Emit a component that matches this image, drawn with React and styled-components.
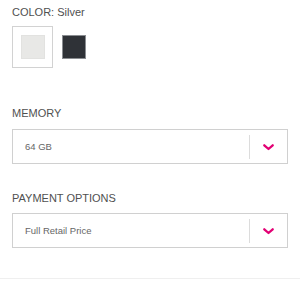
import styled, { createGlobalStyle } from "styled-components";

const GlobalStyle = createGlobalStyle`
  body {
    margin: 0;
    background: #fff;
    font-family: "Liberation Sans", Arial, sans-serif;
  }
`;

const Page = styled.div`
  display: flex;
  flex-direction: column;
  background: #fff;
  width: 300px;
  padding-top: 6px;
`;

const Section = styled.div`
  display: flex;
  flex-direction: column;
  padding: 0 12px;
  margin-bottom: ${(p) => p.$after || 0}px;
`;

const Label = styled.div`
  font-size: 11px;
  line-height: 13px;
  color: #505050;
  margin-bottom: ${(p) => p.$gap}px;
`;

const Value = styled.span`
  color: #505050;
`;

const Swatches = styled.div`
  display: flex;
  gap: 0;
`;

const SwatchBox = styled.div`
  width: 41px;
  height: 42px;
  box-sizing: border-box;
  border: 1px solid ${(p) => (p.$selected ? "#d2d2d2" : "transparent")};
  display: flex;
  align-items: center;
  justify-content: center;
  cursor: pointer;
`;

const Chip = styled.div`
  width: 24px;
  height: 24px;
  background: ${(p) => p.$color};
  border: 1px solid ${(p) => p.$edge};
  box-sizing: border-box;
`;

const SelectBox = styled.div`
  display: flex;
  align-items: center;
  height: 35px;
  box-sizing: border-box;
  border: 1px solid #d0d0d0;
`;

const SelectText = styled.div`
  flex: 1;
  padding-left: 12px;
  font-size: 9.5px;
  color: #666;
  margin-top: -1px;
`;

const ChevronCell = styled.div`
  width: 38px;
  height: 24px;
  border-left: 1px solid #dcdcdc;
  display: flex;
  align-items: center;
  justify-content: center;
  padding-top: 2px;
  box-sizing: border-box;
`;

const Divider = styled.div`
  height: 1px;
  background: #efefef;
  margin-top: 30px;
`;

const Chevron = () => (
  <svg width="11" height="7" viewBox="0 0 11 7">
    <polyline
      points="1.3,1.3 5.5,5 9.7,1.3"
      fill="none"
      stroke="#e20074"
      strokeWidth="2.3"
      strokeLinecap="round"
      strokeLinejoin="round"
    />
  </svg>
);

const Select = ({ value }) => (
  <SelectBox>
    <SelectText>{value}</SelectText>
    <ChevronCell>
      <Chevron />
    </ChevronCell>
  </SelectBox>
);

const swatches = [
  { color: "#e8e8e6", edge: "#e2e2e0", selected: true },
  { color: "#2f3237", edge: "#8a8d91", selected: false },
];

export default function App() {
  return (
    <Page>
      <GlobalStyle />
      <Section $after={39}>
        <Label $gap={7}>
          COLOR:<Value> Silver</Value>
        </Label>
        <Swatches>
          {swatches.map((s, i) => (
            <SwatchBox key={i} $selected={s.selected}>
              <Chip $color={s.color} $edge={s.edge} />
            </SwatchBox>
          ))}
        </Swatches>
      </Section>
      <Section $after={28}>
        <Label $gap={9}>MEMORY</Label>
        <Select value="64 GB" />
      </Section>
      <Section>
        <Label $gap={8}>PAYMENT OPTIONS</Label>
        <Select value="Full Retail Price" />
      </Section>
      <Divider />
    </Page>
  );
}
